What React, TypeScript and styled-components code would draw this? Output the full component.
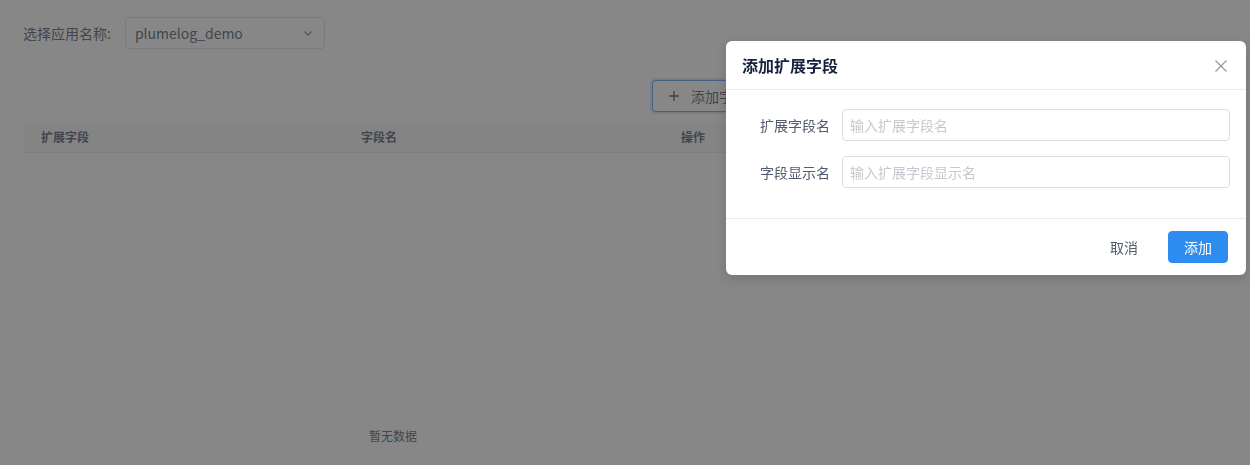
import * as React from 'react';
import styled, { createGlobalStyle } from 'styled-components';

const GlobalStyle = createGlobalStyle`
  html, body {
    margin: 0;
    padding: 0;
    height: 100%;
    overflow: hidden;
    background: #fff;
  }
  body {
    font-family: "Noto Sans CJK SC", "Liberation Sans", sans-serif;
    font-size: 14px;
    line-height: 1.5;
    color: #515a6e;
  }
  * { box-sizing: border-box; }
`;

const Page = styled.div`
  padding: 17px 23px;
  width: 786px;
`;

const FilterRow = styled.div`
  display: flex;
  align-items: center;
`;

const FilterLabel = styled.span`
  font-size: 14px;
  color: #515a6e;
  margin-right: 14px;
`;

const SelectBox = styled.div`
  width: 200px;
  height: 32px;
  display: flex;
  align-items: center;
  justify-content: space-between;
  padding: 0 10px 0 9px;
  border: 1px solid #dcdee2;
  border-radius: 4px;
  font-size: 14px;
  color: #515a6e;
`;

const Toolbar = styled.div`
  display: flex;
  justify-content: flex-end;
  margin-top: 31px;
`;

const AddButton = styled.button`
  height: 32px;
  display: flex;
  align-items: center;
  gap: 12px;
  padding: 0 15px 0 16px;
  font: inherit;
  font-size: 14px;
  color: #515a6e;
  background: #fff;
  border: 1px solid #57a3f3;
  border-radius: 4px;
  box-shadow: 0 0 0 2px rgba(45, 140, 240, 0.2);
`;

const Table = styled.div`
  margin-top: 10px;
  width: 740px;
`;

const HeadRow = styled.div`
  display: grid;
  grid-template-columns: 320px 320px 100px;
  height: 31px;
  align-items: center;
  background: #f8f8f9;
  border-bottom: 1px solid #e8eaec;
`;

const HeadCell = styled.div`
  padding-left: 18px;
  font-size: 12px;
  font-weight: bold;
  color: #515a6e;
`;

const Empty = styled.div`
  height: 566px;
  display: flex;
  align-items: center;
  justify-content: center;
  font-size: 12px;
  color: #515a6e;
`;

const Mask = styled.div`
  position: fixed;
  inset: 0;
  background: rgba(55, 55, 55, 0.6);
`;

const Dialog = styled.div`
  position: fixed;
  left: 726px;
  top: 41px;
  width: 520px;
  background: #fff;
  border-radius: 6px;
  box-shadow: 0 4px 12px rgba(0, 0, 0, 0.15);
`;

const DialogHeader = styled.div`
  position: relative;
  padding: 14px 16px;
  border-bottom: 1px solid #e8eaec;
`;

const DialogTitle = styled.div`
  font-size: 16px;
  line-height: 20px;
  font-weight: bold;
  color: #17233d;
`;

const CloseIcon = styled.svg`
  position: absolute;
  right: 19px;
  top: 19px;
`;

const DialogBody = styled.div`
  padding: 19px 16px 15px;
`;

const FormItem = styled.div`
  display: flex;
  align-items: center;
  margin-bottom: 15px;
`;

const FormLabel = styled.label`
  width: 100px;
  padding-right: 12px;
  text-align: right;
  font-size: 14px;
  color: #515a6e;
`;

const Input = styled.input`
  flex: 1;
  height: 32px;
  padding: 0 7px;
  font: inherit;
  font-size: 14px;
  color: #515a6e;
  border: 1px solid #dcdee2;
  border-radius: 4px;
  outline: none;
  &::placeholder { color: #c5c8ce; }
`;

const DialogFooter = styled.div`
  display: flex;
  justify-content: flex-end;
  align-items: center;
  gap: 14px;
  padding: 12px 18px;
  border-top: 1px solid #e8eaec;
`;

const Button = styled.button<{ primary?: boolean }>`
  height: 32px;
  padding: 0 15px;
  font: inherit;
  font-size: 14px;
  border-radius: 4px;
  border: 1px solid ${(p) => (p.primary ? '#2d8cf0' : 'transparent')};
  background: ${(p) => (p.primary ? '#2d8cf0' : 'transparent')};
  color: ${(p) => (p.primary ? '#fff' : '#515a6e')};
`;

export default function App() {
  return (
    <>
      <GlobalStyle />
      <Page>
        <FilterRow>
          <FilterLabel>选择应用名称:</FilterLabel>
          <SelectBox>
            <span>plumelog_demo</span>
            <svg width="12" height="12" viewBox="0 0 12 12">
              <path d="M2.5 4.5 L6 8 L9.5 4.5" fill="none" stroke="#808695" strokeWidth="1.3" />
            </svg>
          </SelectBox>
        </FilterRow>
        <Toolbar>
          <AddButton>
            <svg width="10" height="10" viewBox="0 0 10 10">
              <path d="M5 0 V10 M0 5 H10" stroke="#515a6e" strokeWidth="1.4" />
            </svg>
            <span>添加字段</span>
          </AddButton>
        </Toolbar>
        <Table>
          <HeadRow>
            <HeadCell>扩展字段</HeadCell>
            <HeadCell>字段名</HeadCell>
            <HeadCell>操作</HeadCell>
          </HeadRow>
          <Empty>暂无数据</Empty>
        </Table>
      </Page>
      <Mask />
      <Dialog>
        <DialogHeader>
          <DialogTitle>添加扩展字段</DialogTitle>
          <CloseIcon width="12" height="12" viewBox="0 0 12 12">
            <path d="M0.5 0.5 L11.5 11.5 M11.5 0.5 L0.5 11.5" stroke="#999" strokeWidth="1.2" />
          </CloseIcon>
        </DialogHeader>
        <DialogBody>
          <FormItem>
            <FormLabel>扩展字段名</FormLabel>
            <Input placeholder="输入扩展字段名" />
          </FormItem>
          <FormItem>
            <FormLabel>字段显示名</FormLabel>
            <Input placeholder="输入扩展字段显示名" />
          </FormItem>
        </DialogBody>
        <DialogFooter>
          <Button>取消</Button>
          <Button primary>添加</Button>
        </DialogFooter>
      </Dialog>
    </>
  );
}
